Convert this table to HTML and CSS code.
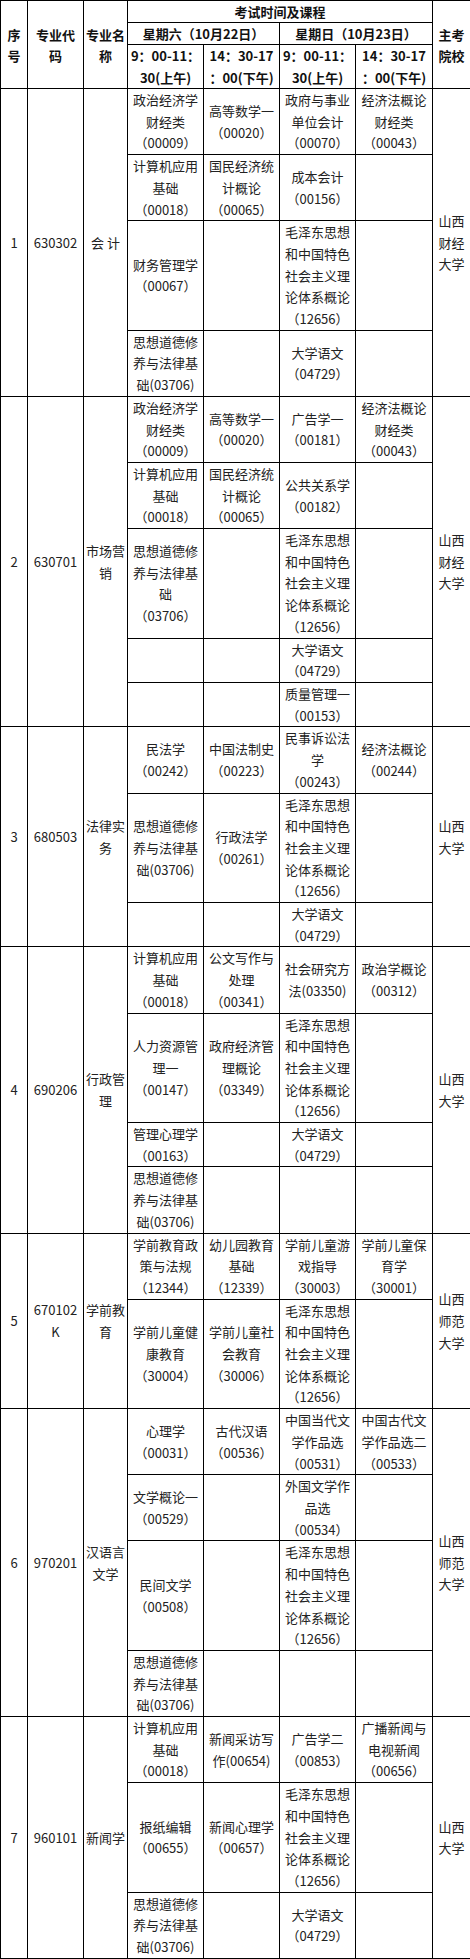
FILE: index.html
```html
<!DOCTYPE html>
<html lang="zh-CN">
<head>
<meta charset="utf-8">
<title>考试时间及课程</title>
<link rel="stylesheet" href="styles.css">
</head>
<body>
<table class="sched">
<colgroup>
<col class="w-no"><col class="w-code"><col class="w-name"><col class="w-c"><col class="w-c"><col class="w-c"><col class="w-c7"><col class="w-sch">
</colgroup>
<thead>
<tr class="h1">
<th rowspan="3">序<br>号</th>
<th rowspan="3">专业代<br>码</th>
<th rowspan="3">专业名<br>称</th>
<th colspan="4">考试时间及课程</th>
<th rowspan="3">主考<br>院校</th>
</tr>
<tr class="h2">
<th colspan="2">星期六（10月22日）</th>
<th colspan="2">星期日（10月23日）</th>
</tr>
<tr class="h3">
<th>9：00-11：<br>30(上午)</th>
<th>14：30-17<br>：00(下午)</th>
<th>9：00-11：<br>30(上午)</th>
<th>14：30-17<br>：00(下午)</th>
</tr>
</thead>
<tbody>
<!-- 1 -->
<tr>
<td rowspan="4">1</td><td rowspan="4">630302</td><td rowspan="4">会 计</td>
<td>政治经济学<br>财经类<br>（00009）</td>
<td>高等数学一<br>（00020）</td>
<td>政府与事业<br>单位会计<br>（00070）</td>
<td>经济法概论<br>财经类<br>（00043）</td>
<td rowspan="4">山西<br>财经<br>大学</td>
</tr>
<tr>
<td>计算机应用<br>基础<br>（00018）</td>
<td>国民经济统<br>计概论<br>（00065）</td>
<td>成本会计<br>（00156）</td>
<td></td>
</tr>
<tr>
<td>财务管理学<br>（00067）</td>
<td></td>
<td>毛泽东思想<br>和中国特色<br>社会主义理<br>论体系概论<br>（12656）</td>
<td></td>
</tr>
<tr>
<td>思想道德修<br>养与法律基<br>础(03706)</td>
<td></td>
<td>大学语文<br>（04729）</td>
<td></td>
</tr>
<!-- 2 -->
<tr>
<td rowspan="5">2</td><td rowspan="5">630701</td><td rowspan="5">市场营<br>销</td>
<td>政治经济学<br>财经类<br>（00009）</td>
<td>高等数学一<br>（00020）</td>
<td>广告学一<br>（00181）</td>
<td>经济法概论<br>财经类<br>（00043）</td>
<td rowspan="5">山西<br>财经<br>大学</td>
</tr>
<tr>
<td>计算机应用<br>基础<br>（00018）</td>
<td>国民经济统<br>计概论<br>（00065）</td>
<td>公共关系学<br>（00182）</td>
<td></td>
</tr>
<tr>
<td>思想道德修<br>养与法律基<br>础<br>（03706）</td>
<td></td>
<td>毛泽东思想<br>和中国特色<br>社会主义理<br>论体系概论<br>（12656）</td>
<td></td>
</tr>
<tr>
<td></td>
<td></td>
<td>大学语文<br>（04729）</td>
<td></td>
</tr>
<tr>
<td></td>
<td></td>
<td>质量管理一<br>（00153）</td>
<td></td>
</tr>
<!-- 3 -->
<tr>
<td rowspan="3">3</td><td rowspan="3">680503</td><td rowspan="3">法律实<br>务</td>
<td>民法学<br>（00242）</td>
<td>中国法制史<br>（00223）</td>
<td>民事诉讼法<br>学<br>（00243）</td>
<td>经济法概论<br>（00244）</td>
<td rowspan="3">山西<br>大学</td>
</tr>
<tr>
<td>思想道德修<br>养与法律基<br>础(03706)</td>
<td>行政法学<br>（00261）</td>
<td>毛泽东思想<br>和中国特色<br>社会主义理<br>论体系概论<br>（12656）</td>
<td></td>
</tr>
<tr>
<td></td>
<td></td>
<td>大学语文<br>（04729）</td>
<td></td>
</tr>
<!-- 4 -->
<tr>
<td rowspan="4">4</td><td rowspan="4">690206</td><td rowspan="4">行政管<br>理</td>
<td>计算机应用<br>基础<br>（00018）</td>
<td>公文写作与<br>处理<br>（00341）</td>
<td>社会研究方<br>法(03350)</td>
<td>政治学概论<br>（00312）</td>
<td rowspan="4">山西<br>大学</td>
</tr>
<tr>
<td>人力资源管<br>理一<br>（00147）</td>
<td>政府经济管<br>理概论<br>（03349）</td>
<td>毛泽东思想<br>和中国特色<br>社会主义理<br>论体系概论<br>（12656）</td>
<td></td>
</tr>
<tr>
<td>管理心理学<br>（00163）</td>
<td></td>
<td>大学语文<br>（04729）</td>
<td></td>
</tr>
<tr>
<td>思想道德修<br>养与法律基<br>础(03706)</td>
<td></td>
<td></td>
<td></td>
</tr>
<!-- 5 -->
<tr>
<td rowspan="2">5</td><td rowspan="2">670102<br>K</td><td rowspan="2">学前教<br>育</td>
<td>学前教育政<br>策与法规<br>（12344）</td>
<td>幼儿园教育<br>基础<br>（12339）</td>
<td>学前儿童游<br>戏指导<br>（30003）</td>
<td>学前儿童保<br>育学<br>（30001）</td>
<td rowspan="2">山西<br>师范<br>大学</td>
</tr>
<tr>
<td>学前儿童健<br>康教育<br>（30004）</td>
<td>学前儿童社<br>会教育<br>（30006）</td>
<td>毛泽东思想<br>和中国特色<br>社会主义理<br>论体系概论<br>（12656）</td>
<td></td>
</tr>
<!-- 6 -->
<tr>
<td rowspan="4">6</td><td rowspan="4">970201</td><td rowspan="4">汉语言<br>文学</td>
<td>心理学<br>（00031）</td>
<td>古代汉语<br>（00536）</td>
<td>中国当代文<br>学作品选<br>（00531）</td>
<td>中国古代文<br>学作品选二<br>（00533）</td>
<td rowspan="4">山西<br>师范<br>大学</td>
</tr>
<tr>
<td>文学概论一<br>（00529）</td>
<td></td>
<td>外国文学作<br>品选<br>（00534）</td>
<td></td>
</tr>
<tr>
<td>民间文学<br>（00508）</td>
<td></td>
<td>毛泽东思想<br>和中国特色<br>社会主义理<br>论体系概论<br>（12656）</td>
<td></td>
</tr>
<tr>
<td>思想道德修<br>养与法律基<br>础(03706)</td>
<td></td>
<td></td>
<td></td>
</tr>
<!-- 7 -->
<tr>
<td rowspan="3">7</td><td rowspan="3">960101</td><td rowspan="3">新闻学</td>
<td>计算机应用<br>基础<br>（00018）</td>
<td>新闻采访写<br>作(00654)</td>
<td>广告学二<br>（00853）</td>
<td>广播新闻与<br>电视新闻<br>（00656）</td>
<td rowspan="3">山西<br>大学</td>
</tr>
<tr>
<td>报纸编辑<br>（00655）</td>
<td>新闻心理学<br>（00657）</td>
<td>毛泽东思想<br>和中国特色<br>社会主义理<br>论体系概论<br>（12656）</td>
<td></td>
</tr>
<tr>
<td>思想道德修<br>养与法律基<br>础(03706)</td>
<td></td>
<td>大学语文<br>（04729）</td>
<td></td>
</tr>
</tbody>
</table>
</body>
</html>
```

FILE: styles.css
```css
html, body {
  margin: 0;
  padding: 0;
  background: #ffffff;
}

.sched {
  border-collapse: collapse;
  table-layout: fixed;
  width: 470px;
  font-family: "Noto Sans CJK SC", "Noto Sans", sans-serif;
  font-size: 13px;
  color: #222222;
}

.w-no { width: 27px; }
.w-code { width: 56px; }
.w-name { width: 44px; }
.w-c { width: 76px; }
.w-c7 { width: 77px; }
.w-sch { width: 38px; }

.sched th,
.sched td {
  border: 1px solid #000000;
  padding: 0;
  text-align: center;
  vertical-align: middle;
  white-space: nowrap;
  overflow: hidden;
}

.sched th {
  font-weight: 700;
  color: #111111;
  line-height: 21px;
}

.sched .h1 th,
.sched .h2 th {
  height: 21px;
}

.sched .h3 th {
  line-height: 21.5px;
}

.sched td {
  line-height: 21.7px;
}
```
